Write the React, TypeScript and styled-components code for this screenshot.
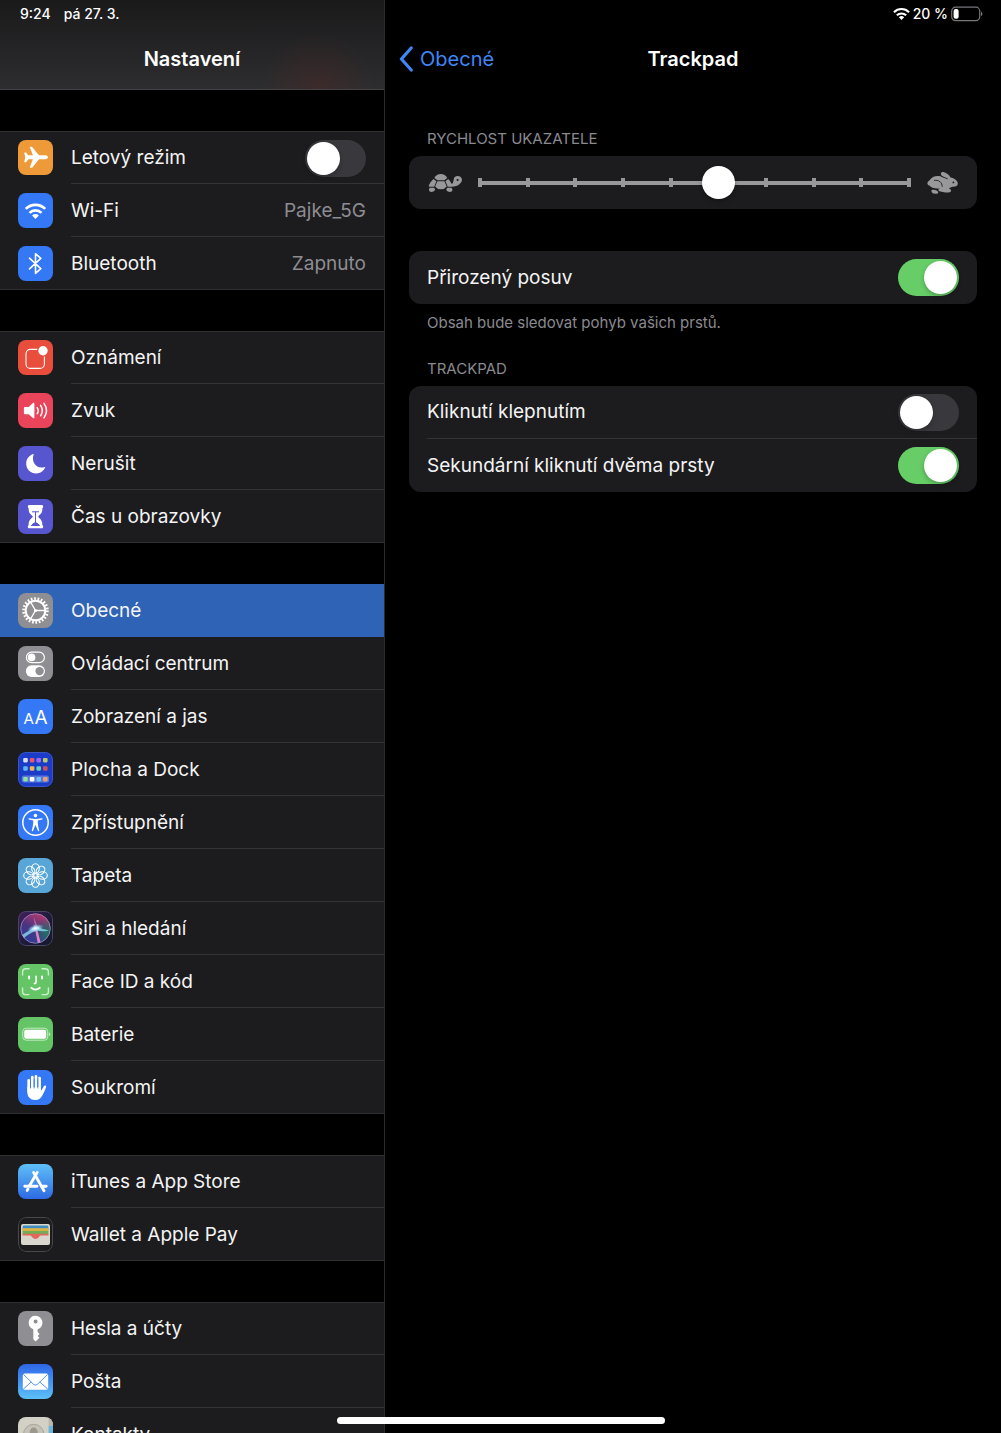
import React, { useState } from 'react';
import styled, { createGlobalStyle } from 'styled-components';

const GlobalStyle = createGlobalStyle`
  *, *::before, *::after { box-sizing: border-box; }
  body {
    margin: 0;
    background: #000;
    color: #fff;
    font-family: Inter, "Liberation Sans", sans-serif;
    font-size: 19px;
    line-height: 24px;
  }
`;

/* ---------- shell ---------- */

const Screen = styled.div`
  display: flex;
  height: 100vh;
  overflow: hidden;
`;

const Sidebar = styled.aside`
  display: flex;
  flex-direction: column;
  flex: 0 0 385px;
  min-width: 0;
  border-right: 1px solid #2a2a2c;
`;

const SidebarHeader = styled.header`
  flex: none;
  border-bottom: 1px solid #444446;
  background:
    radial-gradient(circle 56px at 318px 88px, rgba(90, 40, 36, 0.35), rgba(90, 40, 36, 0) 100%),
    linear-gradient(#1a1a1b, #2d2d2f);
`;

const StatusBar = styled.div<{ $end?: boolean }>`
  display: flex;
  align-items: center;
  justify-content: ${(p) => (p.$end ? 'flex-end' : 'flex-start')};
  gap: ${(p) => (p.$end ? '3px' : '13px')};
  height: 28px;
  padding: 0 18px 0 20px;
  font-size: 14px;
  line-height: 20px;
  font-weight: 500;
`;

const TitleBar = styled.div`
  display: grid;
  grid-template-columns: 1fr auto 1fr;
  align-items: center;
  height: 61px;
  padding: 0 14px;
`;

const Title = styled.h1`
  grid-column: 2;
  margin: 0;
  font-size: 20px;
  line-height: 24px;
  font-weight: 600;
`;

const BackLink = styled.a`
  display: flex;
  align-items: center;
  gap: 7px;
  color: #3f86f7;
  font-size: 20px;
  text-decoration: none;
`;

const Nav = styled.nav`
  display: flex;
  flex-direction: column;
  gap: 41px;
  flex: 1;
  min-height: 0;
  padding-top: 41px;
  overflow-y: auto;
  scrollbar-width: none;
`;

const Group = styled.ul`
  flex: none;
  margin: 0;
  padding: 0;
  list-style: none;
  background: #1c1c1e;
  box-shadow: inset 0 1px #303032, inset 0 -1px #303032;
`;

const Item = styled.li<{ $selected?: boolean }>`
  height: 53px;
  background: ${(p) => (p.$selected ? '#2f63b6' : 'transparent')};
`;

const itemLayout = `
  display: flex;
  align-items: center;
  gap: 18px;
  height: 100%;
  padding-left: 18px;
  color: #f4f4f5;
  text-decoration: none;
`;

const ItemLink = styled.a`${itemLayout}`;
const ItemLabel = styled.label`${itemLayout}`;

const ItemBody = styled.span<{ $line: boolean }>`
  display: flex;
  flex: 1;
  align-items: center;
  justify-content: space-between;
  height: 100%;
  padding: 2px 18px 0 0;
  border-bottom: 1px solid ${(p) => (p.$line ? '#343436' : 'transparent')};
`;

const Value = styled.span`
  color: #8d8d93;
`;

const Tile = styled.svg`
  flex: none;
  width: 35px;
  height: 35px;
  border-radius: 8px;
`;

const Glyph = styled.svg`
  flex: none;
  display: block;
`;

const Main = styled.main`
  flex: 1;
  min-width: 0;
  overflow-y: auto;
`;

const Content = styled.div`
  padding: 40px 24px;
`;

const Section = styled.section<{ $gap?: number }>`
  margin-bottom: ${(p) => p.$gap ?? 0}px;
`;

const SectionTitle = styled.h2`
  margin: 0;
  padding: 0 18px 7px;
  color: #8a8a8f;
  font-size: 15px;
  line-height: 20px;
  font-weight: 400;
`;

const Note = styled.p`
  margin: 0;
  padding: 9px 18px 0;
  color: #8a8a8f;
  font-size: 15px;
  line-height: 20px;
`;

const Card = styled.div`
  overflow: hidden;
  border-radius: 12px;
  background: #1c1c1e;
`;

const SettingRow = styled.label<{ $line?: boolean }>`
  display: flex;
  align-items: center;
  justify-content: space-between;
  height: 53px;
  margin-left: 18px;
  padding-right: 18px;
  border-bottom: ${(p) => (p.$line ? '1px solid #343436' : 'none')};
  color: #f4f4f5;
`;

const Toggle = styled.input`
  appearance: none;
  flex: none;
  width: 61px;
  height: 37px;
  margin: 0;
  padding: 2px;
  border-radius: 19px;
  background: #39393d;

  &::before {
    content: '';
    display: block;
    width: 33px;
    height: 33px;
    border-radius: 50%;
    background: #fff;
    box-shadow: 0 2px 5px rgba(0, 0, 0, 0.25);
  }
  &:checked { background: #67ce67; }
  &:checked::before { margin-left: 24px; }
`;

const SliderRow = styled.div`
  display: flex;
  align-items: center;
  gap: 1px;
  height: 53px;
  padding: 0 18px;
`;

const SliderStack = styled.div`
  display: grid;
  flex: 1;
  align-items: center;
  & > * { grid-area: 1 / 1; }
`;

const Ticks = styled.div`
  display: flex;
  align-items: center;
  justify-content: space-between;
  height: 9px;
  margin: 0 15px;
  background: linear-gradient(#98989a, #98989a) center / 100% 4px no-repeat;
`;

const Tick = styled.span`
  width: 4px;
  height: 9px;
  background: #98989a;
`;

const Range = styled.input`
  appearance: none;
  width: 100%;
  height: 33px;
  margin: 0;
  background: transparent;

  &::-webkit-slider-thumb {
    appearance: none;
    width: 33px;
    height: 33px;
    border: 0;
    border-radius: 50%;
    background: #fff;
    box-shadow: 0 2px 5px rgba(0, 0, 0, 0.3);
  }
`;

const HomeIndicator = styled.div`
  position: fixed;
  bottom: 9px;
  left: 50%;
  width: 328px;
  height: 7px;
  margin-left: -164px;
  border-radius: 4px;
  background: #fff;
`;

/* ---------- drawings ---------- */

type TileProps = { bg: string; children: React.ReactNode };

const IconTile = ({ bg, children }: TileProps) => (
  <Tile viewBox="0 0 35 35" fill="none" aria-hidden="true">
    <rect width="35" height="35" fill={bg} />
    {children}
  </Tile>
);

const WifiShape = () => (
  <>
    <g stroke="#fff" strokeWidth="2.7">
      <path d="M7.8 15.9A13.6 13.6 0 0 1 27.2 15.9" />
      <path d="M11.5 19.9A8.6 8.6 0 0 1 23.5 19.9" />
    </g>
    <path d="M17.5 26L14.1 22.5A4.8 4.8 0 0 1 20.9 22.5Z" fill="#fff" />
  </>
);

const Airplane = () => (
  <IconTile bg="#ee9a38">
    <path
      fill="#fff"
      d="M30 17.3C30 18.7 28 19.3 26.3 19.3H21L14.6 27.2C14.3 27.6 13.9 27.8 13.4 27.8H12.5C12 27.8 11.8 27.4 11.9 27L14.9 19.3H10.3L8.3 21.9C8.1 22.1 7.8 22.2 7.5 22.2H6.9C6.4 22.2 6.2 21.9 6.3 21.5L7.3 17.3L6.3 13.1C6.2 12.7 6.4 12.4 6.9 12.4H7.5C7.8 12.4 8.1 12.5 8.3 12.7L10.3 15.3H14.9L11.9 7.6C11.8 7.2 12 6.8 12.5 6.8H13.4C13.9 6.8 14.3 7 14.6 7.4L21 15.3H26.3C28 15.3 30 15.9 30 17.3Z"
    />
  </IconTile>
);

const Wifi = () => (
  <IconTile bg="#3478f6"><WifiShape /></IconTile>
);

const Bluetooth = () => (
  <IconTile bg="#3478f6">
    <path d="M11.5 12.2L22.8 22.6L17.5 27.3V7.7L22.8 12.4L11.5 22.8" stroke="#fff" strokeWidth="1.6" strokeLinejoin="round" strokeLinecap="round" />
  </IconTile>
);

const Bell = () => (
  <IconTile bg="#e94e3d">
    <rect x="8" y="9.4" width="18.4" height="19" rx="4.5" stroke="#fff" strokeWidth="1.1" />
    <circle cx="25" cy="10.7" r="6" fill="#e94e3d" />
    <circle cx="25" cy="10.7" r="4.7" fill="#fff" />
  </IconTile>
);

const Sound = () => (
  <IconTile bg="#ea445a">
    <path fill="#fff" d="M7.2 14H10.6L15 10.1C15.6 9.6 16.4 9.9 16.4 10.8V24.4C16.4 25.3 15.6 25.6 15 25.1L10.6 21.2H7.2C6.4 21.2 5.9 20.7 5.9 19.9V15.3C5.9 14.5 6.4 14 7.2 14Z" />
    <g stroke="#fff" strokeWidth="1.5" strokeLinecap="round">
      <path d="M19.2 14.6Q21.2 17.6 19.2 20.6" />
      <path d="M22.6 12.4Q26 17.6 22.6 22.8" />
      <path d="M26 10.4Q31 17.6 26 24.8" />
    </g>
  </IconTile>
);

const Moon = () => (
  <IconTile bg="#5856ce">
    <path fill="#fff" d="M15.7 8.2C16 8 15.9 7.8 15.4 8C11.1 9.3 8.2 13 8.2 17.5C8.2 23.2 12.6 27.5 18.2 27.5C22.3 27.5 25.8 25 27.2 21.3C27.4 20.8 27.2 20.7 26.8 20.9C19.3 23.5 12.6 16.5 15.7 8.2Z" />
  </IconTile>
);

const Hourglass = () => (
  <IconTile bg="#5856ce">
    <path fill="#fff" d="M11 6H24C25.4 6 25.6 8.6 24.4 9.1C24.4 13.2 23.4 14.8 20.6 17C20.2 17.4 20.2 18 20.6 18.4C23.4 20.6 24.4 22.2 24.4 26.2C25.6 26.7 25.4 29.2 24 29.2H11C9.6 29.2 9.4 26.7 10.6 26.2C10.6 22.2 11.6 20.6 14.4 18.4C14.8 18 14.8 17.4 14.4 17C11.6 14.8 10.6 13.2 10.6 9.1C9.4 8.6 9.6 6 11 6Z" />
    <g stroke="#5856ce" strokeWidth="1" strokeLinecap="round" strokeLinejoin="round">
      <path d="M14.4 12.8H20.6M17.5 13V24" />
      <path d="M13.6 26.2Q15 24.4 17.5 23.6Q20 24.4 21.4 26.2Z" fill="#5856ce" />
    </g>
  </IconTile>
);

const Gear = () => (
  <IconTile bg="#8e8e93">
    <g stroke="#fff">
      <circle cx="17.5" cy="17.5" r="11.9" strokeWidth="2.8" strokeDasharray="1.7 1.698" />
      <circle cx="17.5" cy="17.5" r="9.8" strokeWidth="2" />
      <path d="M17.5 17.5H27M17.5 17.5L12.6 9.2M17.5 17.5L12.6 25.8" strokeWidth="1.3" />
    </g>
    <circle cx="17.5" cy="17.5" r="1.5" fill="#fff" />
  </IconTile>
);

const Switches = () => (
  <IconTile bg="#8e8e93">
    <rect x="8.4" y="6.2" width="18" height="10.4" rx="5.2" stroke="#fff" strokeWidth="1.2" />
    <circle cx="13.6" cy="11.4" r="3.8" fill="#fff" />
    <rect x="7.8" y="19.3" width="19.2" height="11.6" rx="5.8" fill="#fff" />
    <circle cx="21.6" cy="25.1" r="4.2" fill="#8e8e93" />
  </IconTile>
);

const TextSize = () => (
  <IconTile bg="#3478f6">
    <g fill="#fff" fontFamily="Inter, sans-serif" fontWeight="400" textAnchor="middle">
      <text x="10.8" y="24.7" fontSize="15">A</text>
      <text x="23" y="24.7" fontSize="19">A</text>
    </g>
  </IconTile>
);

const appDots = [
  ['#d9dbe8', '#e8566f', '#9a6cf5', '#b9c96c'],
  ['#5fb5f0', '#f0b45a', '#5fcfc0', '#d0505a'],
  ['#8ee0a0', '#ffffff', '#6fc0ff', '#e8a070'],
];
const dotRows = [6, 14.3, 25];

const Dock = () => (
  <IconTile bg="#1a3cc8">
    <rect x=".5" y=".5" width="34" height="34" rx="7.5" stroke="#3d55c0" />
    <rect x="3.8" y="23.6" width="27.2" height="7" rx="2" fill="#5a76d8" />
    {appDots.map((row, r) =>
      row.map((c, i) => <rect key={c} x={5.2 + i * 6.6} y={dotRows[r]} width="4.6" height="4.4" rx="1.1" fill={c} />)
    )}
  </IconTile>
);

const Accessibility = () => (
  <IconTile bg="#3478f6">
    <circle cx="17.5" cy="17.5" r="12.7" stroke="#fff" strokeWidth="1.5" />
    <circle cx="17.5" cy="10.6" r="1.8" fill="#fff" />
    <path fill="#fff" d="M11.2 13.2C13.4 13.7 15.4 13.9 17.5 13.9C19.6 13.9 21.6 13.7 23.8 13.2C24.7 13 24.9 14.3 24.1 14.5C22.6 14.9 21.2 15.2 19.8 15.4C19.6 18.6 20.3 22 21.2 25.4C21.4 26.3 20.2 26.6 19.9 25.8L17.7 20.3H17.3L15.1 25.8C14.8 26.6 13.6 26.3 13.8 25.4C14.7 22 15.4 18.6 15.2 15.4C13.8 15.2 12.4 14.9 10.9 14.5C10.1 14.3 10.3 13 11.2 13.2Z" />
  </IconTile>
);

const Flower = () => (
  <IconTile bg="#58a6d8">
    <g stroke="#fff" strokeWidth="1.1">
      {[0, 45, 90, 135, 180, 225, 270, 315].map((a) => (
        <ellipse key={a} cx="17.5" cy="10.4" rx="3.8" ry="4.7" transform={`rotate(${a} 17.5 17.5)`} />
      ))}
      <circle cx="17.5" cy="17.5" r="1.8" />
    </g>
  </IconTile>
);

const Siri = () => (
  <IconTile bg="url(#siri-bg)">
    <defs>
      <linearGradient id="siri-bg" x1="0" y1="0" x2="1" y2="1">
        <stop offset="0" stopColor="#45205f" />
        <stop offset=".6" stopColor="#1a1a38" />
        <stop offset="1" stopColor="#15182a" />
      </linearGradient>
      <linearGradient id="siri-orb" x1=".2" y1="1" x2=".7" y2="0">
        <stop offset="0" stopColor="#2c3f9c" />
        <stop offset=".5" stopColor="#4a3480" />
        <stop offset="1" stopColor="#b8386c" />
      </linearGradient>
      <radialGradient id="siri-teal" cx=".9" cy=".65" r=".5">
        <stop offset="0" stopColor="#1f6f66" />
        <stop offset="1" stopColor="#1f6f66" stopOpacity="0" />
      </radialGradient>
      <radialGradient id="siri-glow">
        <stop offset="0" stopColor="#fff" />
        <stop offset=".4" stopColor="#c5f0ff" stopOpacity=".8" />
        <stop offset="1" stopColor="#6ad0ff" stopOpacity="0" />
      </radialGradient>
    </defs>
    <rect x=".5" y=".5" width="34" height="34" rx="7.5" stroke="#4a4464" />
    <circle cx="17.5" cy="17.5" r="14.8" fill="url(#siri-orb)" />
    <circle cx="17.5" cy="17.5" r="14.8" fill="url(#siri-teal)" />
    <path d="M4 24C9 21 13.5 18.5 16.5 15.5L15 13L18.5 15.8C22 17.4 26 18 31 19.4C26 20.6 22 20.4 19.5 19.6C13 21 9 25 6 27Z" fill="#8fe6f5" fillOpacity=".75" />
    <path d="M17 18L19 17.5L22.5 31L19.8 32Z" fill="#f58ad0" fillOpacity=".9" />
    <path d="M17.2 16L15.6 5.5L19.4 15Z" fill="#f0a0c0" fillOpacity=".5" />
    <ellipse cx="17.5" cy="17.3" rx="8.5" ry="3.8" fill="url(#siri-glow)" transform="rotate(-14 17.5 17.3)" />
    <circle cx="17.5" cy="17.5" r="14.8" stroke="#b8a8d8" strokeOpacity=".7" strokeWidth=".9" />
  </IconTile>
);

const FaceId = () => (
  <IconTile bg="#65c466">
    <path d="M4.6 11V8Q4.6 4.8 7.8 4.8H11M24 4.8H27.2Q30.4 4.8 30.4 8V11M30.4 24V27.4Q30.4 30.6 27.2 30.6H24M11 30.6H7.8Q4.6 30.6 4.6 27.4V24" stroke="#cdeecd" strokeWidth="1.4" strokeLinecap="round" />
    <g stroke="#fff" strokeWidth="2" strokeLinecap="round">
      <path d="M11.1 12.4V14.4M24 12.4V14.4" />
      <path d="M18.1 12.2V18Q18.1 19.6 16.4 19.6" strokeWidth="1.6" />
      <path d="M13.2 23.8Q17.5 27.4 21.8 23.8" strokeWidth="1.8" />
    </g>
  </IconTile>
);

const BatteryTile = () => (
  <IconTile bg="#65c466">
    <rect x="4.7" y="11.2" width="25" height="12" rx="3.4" stroke="#c3eac3" strokeWidth="1" />
    <rect x="6.2" y="12.7" width="22" height="9" rx="2" fill="#fff" />
    <path d="M30.8 15.2Q32.2 15.8 32.2 17.2T30.8 19.2Z" fill="#c3eac3" />
  </IconTile>
);

const Hand = () => (
  <IconTile bg="#3478f6">
    <g stroke="#fff" strokeWidth="2.7" strokeLinecap="round">
      <path d="M10.7 10.3V21M14.3 7.2V20M18 6.4V20M21.6 8V21" />
    </g>
    <path fill="#fff" d="M9.3 17H23V20.6C24.2 19.4 25 17.6 25.9 16.2C26.6 15.2 28.6 15.5 28.1 17C27 20.4 25.5 23.3 24.2 25.8C22.8 28.6 20.5 30 17.2 30C12.4 30 9.3 26.8 9.3 22Z" />
    <path d="M12.5 10.5V18M16.15 9V18M19.8 9V18" stroke="#3478f6" strokeWidth=".9" strokeLinecap="round" />
  </IconTile>
);

const AppStore = () => (
  <IconTile bg="url(#store-bg)">
    <defs>
      <linearGradient id="store-bg" x2="0" y2="1">
        <stop stopColor="#5fc0f7" />
        <stop offset="1" stopColor="#2e69e4" />
      </linearGradient>
    </defs>
    <g stroke="#fff" strokeWidth="2.9" strokeLinecap="round">
      <path d="M19.2 8.4L11.6 21.6M10 25L9.2 26.4" />
      <path d="M15.6 8.4L26 26.8" />
      <path d="M6.8 22.2H19M24.8 22.2H28.2" />
    </g>
  </IconTile>
);

const Wallet = () => (
  <IconTile bg="#1c1c1e">
    <rect x=".5" y=".5" width="34" height="34" rx="7.5" stroke="#48484a" />
    <rect x="3" y="7" width="29" height="21" rx="2" fill="#d9d6cd" />
    <path d="M4.6 10Q4.6 8.6 6 8.6H29Q30.4 8.6 30.4 10V13H4.6Z" fill="#3f8fc4" />
    <rect x="4.6" y="11.2" width="25.8" height="4" fill="#e3b23f" />
    <rect x="4.6" y="13.9" width="25.8" height="4" fill="#6fae54" />
    <path d="M4.6 16.8H30.4V20L17.5 23L4.6 20Z" fill="#e2685b" />
    <path d="M4 18.6H12C14 18.6 14 22 17.5 22S21 18.6 23 18.6H31V27H4Z" fill="#d9d6cd" />
  </IconTile>
);

const Key = () => (
  <IconTile bg="#8e8e93">
    <path fill="#fff" fillRule="evenodd" d="M17.6 4.8A6.9 6.9 0 0 0 15.3 18.2V28.2L17.6 30.4L21.4 26.8L19.6 24.9L21.6 22.9L19.6 20.9V18.3A6.9 6.9 0 0 0 17.6 4.8ZM17.6 8.4A2 2 0 1 1 17.6 12.4A2 2 0 1 1 17.6 8.4Z" />
  </IconTile>
);

const Mail = () => (
  <IconTile bg="url(#mail-bg)">
    <defs>
      <linearGradient id="mail-bg" x2="0" y2="1">
        <stop stopColor="#2d66e6" />
        <stop offset="1" stopColor="#5dc0f7" />
      </linearGradient>
    </defs>
    <rect x="4.8" y="9.6" width="25.4" height="16.2" rx="1.8" fill="#fff" />
    <path d="M5.4 10.4L15.4 20.2Q17.5 22.2 19.6 20.2L29.6 10.4M5.4 25L13.2 18M29.6 25L21.8 18" stroke="#4488ee" strokeWidth=".9" />
  </IconTile>
);

const Contacts = () => (
  <IconTile bg="#d3d0c6">
    <path d="M30.6 0H35V9H30.6Z" fill="#b9b7ae" />
    <path d="M30.6 9H35V22H30.6Z" fill="#68b4dc" />
    <circle cx="15.7" cy="17.6" r="10.3" fill="#c5c2b8" stroke="#a5a299" strokeWidth=".9" />
    <ellipse cx="15.7" cy="15.4" rx="4" ry="4.8" fill="#9b988f" />
    <path d="M8 24.4Q15.7 18 23.4 24.4Q15.7 31 8 24.4Z" fill="#9b988f" />
  </IconTile>
);

const Turtle = () => (
  <Glyph width="35" height="20" viewBox="0 0 35 20" fill="#98989a" aria-hidden="true">
    <path d="M7.4 4.9Q9.4 1.1 13.8 1.1T20.2 4.9L17.4 7.3H10.4Z" />
    <path d="M6.4 6.1L9.4 8.3L7.2 13.8H2.6Q1.2 13.8 2 12.1Q3.4 8.8 6.4 6.1Z" />
    <path d="M10.4 8.3H17.4L19.7 13.4Q17.6 16.3 13.9 16.3T8.1 13.4Z" />
    <path d="M21.2 6.1L18.4 8.3L20.8 13.8H24.4Q30 13.6 32.6 11Q35 9.8 35 6.8Q34.5 2.9 30.6 2.9Q27 3 26.7 6.6Q26.7 8.6 25 11.2Q23.4 8.2 21.2 6.1Z" />
    <path d="M2.8 14.8H7.2L8.2 16.8Q7.4 18.9 4.6 18.9Q2 18.9 2 17Q2 15.6 2.8 14.8ZM20.2 14.8H24.6Q25.4 15.6 25.4 17Q25.4 18.9 22.4 18.9Q20 18.9 19.2 16.8Z" />
    <circle cx="30.6" cy="7" r="1.1" fill="#1c1c1e" />
  </Glyph>
);

const Rabbit = () => (
  <Glyph width="32" height="24" viewBox="0 0 32 24" fill="#98989a" aria-hidden="true">
    <path d="M.6 13.2C-.2 11.4 1.6 9.8 2.6 9.2C4.8 5.6 9.2 4.2 13.4 5.3L19.4 7.6C17 6.4 14.6 5 14 3.4C13.4 1.8 14.6.9 16.2 1C19.6 1.4 22 3.8 23.6 6.6C27.2 7.4 30.6 9.4 30.8 12.6C30.8 15 28.6 16 25.4 15.8L21.8 17.2C23.4 18 24.6 19 23.8 20.4C23.2 21.6 20.6 21.6 18.4 21.4L13.4 20.4C10.6 19.6 10.8 18.2 13.2 17.8L7.6 17.2C4.8 16.6 3 15.4 2.4 14.4C1.6 14.4 1 14 .6 13.2Z" />
    <path d="M5.4 18.8Q9 18.4 11 20.6Q12 22.6 9.4 22.7L6.2 22.4Q4.2 21.4 4.4 19.8Q4.6 19 5.4 18.8Z" />
    <path d="M7.4 9.4C11.6 8.4 15.4 11.6 15.2 15.4M14.6 5.4L20.4 7.8" stroke="#1c1c1e" strokeWidth=".9" fill="none" strokeLinecap="round" />
    <circle cx="26.4" cy="11.4" r=".9" fill="#1c1c1e" />
  </Glyph>
);

/* ---------- data ---------- */

type Entry = { label: string; icon: () => React.JSX.Element; value?: string; toggle?: boolean };

const groups: Entry[][] = [
  [
    { label: 'Letový režim', icon: Airplane, toggle: true },
    { label: 'Wi-Fi', icon: Wifi, value: 'Pajke_5G' },
    { label: 'Bluetooth', icon: Bluetooth, value: 'Zapnuto' },
  ],
  [
    { label: 'Oznámení', icon: Bell },
    { label: 'Zvuk', icon: Sound },
    { label: 'Nerušit', icon: Moon },
    { label: 'Čas u obrazovky', icon: Hourglass },
  ],
  [
    { label: 'Obecné', icon: Gear },
    { label: 'Ovládací centrum', icon: Switches },
    { label: 'Zobrazení a jas', icon: TextSize },
    { label: 'Plocha a Dock', icon: Dock },
    { label: 'Zpřístupnění', icon: Accessibility },
    { label: 'Tapeta', icon: Flower },
    { label: 'Siri a hledání', icon: Siri },
    { label: 'Face ID a kód', icon: FaceId },
    { label: 'Baterie', icon: BatteryTile },
    { label: 'Soukromí', icon: Hand },
  ],
  [
    { label: 'iTunes a App Store', icon: AppStore },
    { label: 'Wallet a Apple Pay', icon: Wallet },
  ],
  [
    { label: 'Hesla a účty', icon: Key },
    { label: 'Pošta', icon: Mail },
    { label: 'Kontakty', icon: Contacts },
  ],
];

const speeds = Array.from({ length: 10 }, (_, i) => i);

export default function App() {
  const [airplane, setAirplane] = useState(false);
  const [selected, setSelected] = useState('Obecné');
  const [speed, setSpeed] = useState(5);
  const [natural, setNatural] = useState(true);
  const [tap, setTap] = useState(false);
  const [secondary, setSecondary] = useState(true);

  return (
    <>
      <GlobalStyle />
      <Screen>
        <Sidebar>
          <SidebarHeader>
            <StatusBar>
              <span>9:24</span>
              <span>pá 27. 3.</span>
            </StatusBar>
            <TitleBar><Title>Nastavení</Title></TitleBar>
          </SidebarHeader>
          <Nav>
            {groups.map((entries) => (
              <Group key={entries[0].label}>
                {entries.map(({ label, icon: Icon, value, toggle }, i) => {
                  const active = label === selected;
                  const body = (
                    <>
                      <Icon />
                      <ItemBody $line={i < entries.length - 1 && !active}>
                        <span>{label}</span>
                        {value && <Value>{value}</Value>}
                        {toggle && (
                          <Toggle type="checkbox" role="switch" checked={airplane} onChange={(e) => setAirplane(e.target.checked)} />
                        )}
                      </ItemBody>
                    </>
                  );
                  return (
                    <Item key={label} $selected={active}>
                      {toggle ? (
                        <ItemLabel>{body}</ItemLabel>
                      ) : (
                        <ItemLink href="#" onClick={() => setSelected(label)}>{body}</ItemLink>
                      )}
                    </Item>
                  );
                })}
              </Group>
            ))}
          </Nav>
        </Sidebar>

        <Main>
          <StatusBar $end>
            <Glyph width="17" height="14" viewBox="6.6 9.2 21.8 18" fill="none" aria-hidden="true"><WifiShape /></Glyph>
            <span>20 %</span>
            <Glyph width="32" height="16" viewBox="0 0 32 16" fill="none" aria-hidden="true">
              <rect x=".7" y="1.2" width="28" height="13.4" rx="3.8" stroke="#77777a" strokeWidth="1.2" />
              <rect x="2.6" y="3" width="5" height="9.8" rx="2" fill="#fff" />
              <path d="M30 5.6Q31.4 6.4 31.4 7.9T30 10.2Z" fill="#77777a" />
            </Glyph>
          </StatusBar>
          <TitleBar>
            <BackLink href="#">
              <Glyph width="14" height="26" viewBox="0 0 14 26" fill="none" aria-hidden="true">
                <path d="M12.2 2L2.4 13L12.2 24" stroke="#3f86f7" strokeWidth="3.2" strokeLinecap="round" strokeLinejoin="round" />
              </Glyph>
              Obecné
            </BackLink>
            <Title>Trackpad</Title>
          </TitleBar>
          <Content>
            <Section $gap={42}>
              <SectionTitle id="speed">RYCHLOST UKAZATELE</SectionTitle>
              <Card>
                <SliderRow>
                  <Turtle />
                  <SliderStack>
                    <Ticks>{speeds.map((s) => <Tick key={s} />)}</Ticks>
                    <Range type="range" min={0} max={9} value={speed} aria-labelledby="speed" onChange={(e) => setSpeed(Number(e.target.value))} />
                  </SliderStack>
                  <Rabbit />
                </SliderRow>
              </Card>
            </Section>
            <Section $gap={26}>
              <Card>
                <SettingRow>
                  Přirozený posuv
                  <Toggle type="checkbox" role="switch" checked={natural} onChange={(e) => setNatural(e.target.checked)} />
                </SettingRow>
              </Card>
              <Note>Obsah bude sledovat pohyb vašich prstů.</Note>
            </Section>
            <Section>
              <SectionTitle>TRACKPAD</SectionTitle>
              <Card>
                <SettingRow $line>
                  Kliknutí klepnutím
                  <Toggle type="checkbox" role="switch" checked={tap} onChange={(e) => setTap(e.target.checked)} />
                </SettingRow>
                <SettingRow>
                  Sekundární kliknutí dvěma prsty
                  <Toggle type="checkbox" role="switch" checked={secondary} onChange={(e) => setSecondary(e.target.checked)} />
                </SettingRow>
              </Card>
            </Section>
          </Content>
        </Main>
      </Screen>
      <HomeIndicator />
    </>
  );
}
